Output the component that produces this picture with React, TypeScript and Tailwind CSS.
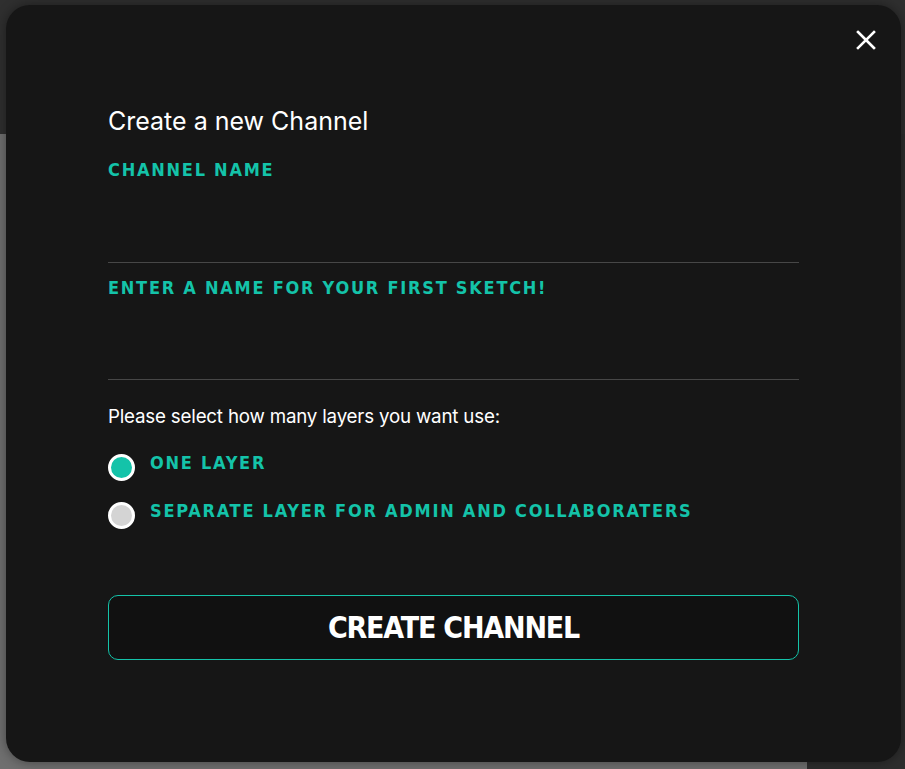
import React, { useState } from 'react';

const label = "font-['DejaVu_Sans_Condensed','DejaVu_Sans',sans-serif] font-bold text-[18px] tracking-[1.75px] text-[#14c3a9] uppercase";

function Radio({ checked, onClick, text }: { checked: boolean; onClick: () => void; text: string }) {
  return (
    <button type="button" onClick={onClick} className="flex items-start gap-[15px] text-left">
      <span
        className={`mt-[-1px] block h-[27px] w-[27px] shrink-0 rounded-full border-[3px] border-white ${
          checked ? 'bg-[#14c3a9]' : 'bg-[#d4d4d4]'
        }`}
      />
      <span className={`${label} mt-[-2px] leading-[20px]`}>{text}</span>
    </button>
  );
}

export default function App() {
  const [layers, setLayers] = useState(0);

  return (
    <div className="relative h-[769px] w-[905px] overflow-hidden bg-[#6f6f6f]">
      {/* dimmed page behind the modal */}
      <div className="flex h-full flex-col">
        <div className="h-[134px] bg-[#2f2f2f]" />
        <div className="flex flex-1">
          <div className="flex-1 bg-[#6f6f6f]" />
          <div className="w-[98px] bg-[#2d2d2d]" />
        </div>
      </div>

      {/* modal */}
      <div className="absolute left-[6px] top-[5px] h-[757px] w-[895px] rounded-[24px] bg-[#161616] shadow-[0_0_12px_rgba(0,0,0,0.4)]">
        <button type="button" className="absolute right-[25px] top-[25px] text-white" aria-label="close">
          <svg width="20" height="20" viewBox="0 0 20 20">
            <path d="M2 2 L18 18 M18 2 L2 18" stroke="white" strokeWidth="2.6" strokeLinecap="square" />
          </svg>
        </button>

        <div className="flex flex-col px-[102px] pt-[101px] font-['Inter',sans-serif]">
          <h1 className="text-[25px] leading-[30px] text-white tracking-[0px]">Create a new Channel</h1>

          <label className={`${label} mt-[24px] leading-[20px]`}>Channel Name</label>
          <input className="h-[83px] w-full border-b border-[#474747] bg-transparent text-white outline-none" />

          <label className={`${label} mt-[15px] leading-[20px]`}>Enter a name for your first sketch!</label>
          <input className="h-[82px] w-full border-b border-[#474747] bg-transparent text-white outline-none" />

          <p className="mt-[24px] text-[18.75px] leading-[26px] text-white tracking-[-0.2px]">
            Please select how many layers you want use:
          </p>

          <div className="mt-[25px] flex flex-col gap-[22px]">
            <Radio checked={layers === 0} onClick={() => setLayers(0)} text="One Layer" />
            <Radio checked={layers === 1} onClick={() => setLayers(1)} text="Separate layer for admin and collaboraters" />
          </div>

          <button
            type="button"
            className="mt-[66px] flex h-[65px] w-full items-center justify-center rounded-[10px] border border-[#14c3a9] bg-[#111111] font-['DejaVu_Sans_Condensed',sans-serif] text-[30px] font-bold text-white tracking-[-1.2px]"
          >
            CREATE CHANNEL
          </button>
        </div>
      </div>
    </div>
  );
}
